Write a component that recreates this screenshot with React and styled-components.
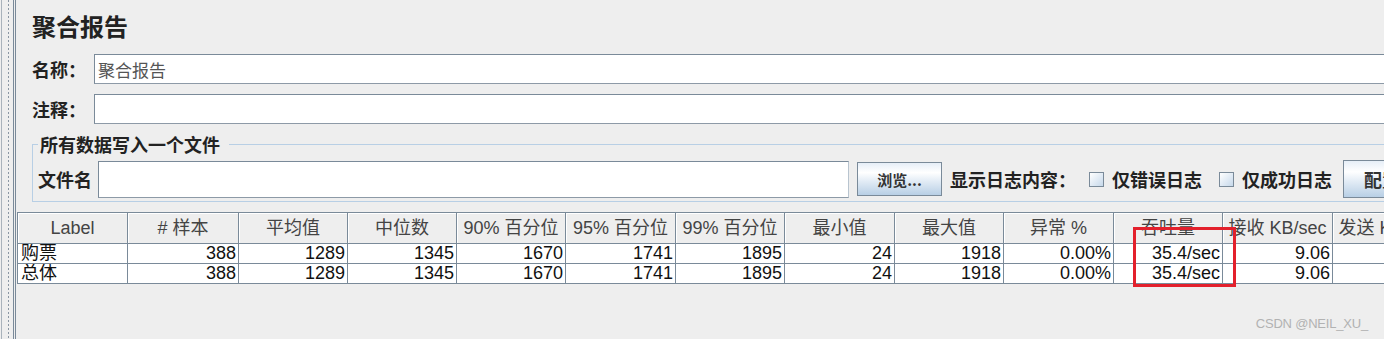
import React from 'react';
import styled, { createGlobalStyle } from 'styled-components';

const GlobalStyle = createGlobalStyle`
  html, body {
    margin: 0;
    padding: 0;
    background: #eeeeee;
    overflow: hidden;
  }
  body {
    font-family: "Liberation Sans", "Noto Sans CJK SC", sans-serif;
    color: #222;
  }
`;

const Window = styled.div`
  position: relative;
  display: flex;
  width: 1384px;
  height: 339px;
  overflow: hidden;
  background: #eeeeee;
`;

const Splitter = styled.div`
  flex: 0 0 17px;
  background:
    linear-gradient(#a9b2bb, #a9b2bb) 1px 0 / 1px 100% no-repeat,
    repeating-linear-gradient(to bottom, #8a96a3 0 2px, transparent 2px 4px) 8px 0 / 1px 100% no-repeat,
    linear-gradient(#7a8a99, #7a8a99) 13px 0 / 1px 100% no-repeat,
    linear-gradient(#7a8a99, #7a8a99) 15px 0 / 1px 100% no-repeat,
    #eeeeee;
`;

const Main = styled.div`
  flex: none;
  width: 1460px;
  display: flex;
  flex-direction: column;
`;

const Form = styled.div`
  display: flex;
  flex-direction: column;
  gap: 10px;
  padding: 11px 0 0 15px;
`;

const Title = styled.div`
  font-family: "Noto Sans CJK SC", sans-serif;
  font-size: 24px;
  font-weight: bold;
  line-height: 30px;
  margin-bottom: 3px;
`;

const FieldRow = styled.div`
  display: flex;
  align-items: center;
  height: 30px;
`;

const FieldLabel = styled.span`
  flex: 0 0 ${({ $w }) => $w}px;
  font-family: "Noto Sans CJK SC", sans-serif;
  font-size: 18px;
  font-weight: bold;
  line-height: 20px;
  white-space: nowrap;
`;

const TextInput = styled.input`
  box-sizing: border-box;
  flex: ${({ $w }) => ($w ? `0 0 ${$w}px` : '1')};
  height: ${({ $h }) => $h || 30}px;
  margin: 0;
  padding: 0 3px;
  border: 1px solid #7a8a99;
  border-right-color: #b8c4cf;
  border-bottom-color: #8d9aa7;
  background: #ffffff;
  font-family: "Noto Sans CJK SC", sans-serif;
  font-size: 17px;
  color: #555;
  outline: none;
`;

const Group = styled.fieldset`
  margin: 0;
  padding: 6px 0 3px 5px;
  border: 1px solid #b8cfe5;
  min-width: 0;
`;

const Legend = styled.legend`
  padding: 0 9px 0 2px;
  font-family: "Noto Sans CJK SC", sans-serif;
  font-size: 18px;
  font-weight: bold;
  line-height: 20px;
`;

const FileRow = styled.div`
  display: flex;
  align-items: center;
  height: 38px;
`;

const MetalButton = styled.button`
  flex: none;
  box-sizing: border-box;
  margin: 0 0 0 ${({ $ml }) => $ml}px;
  width: ${({ $w }) => $w}px;
  height: ${({ $h }) => $h}px;
  padding: 0;
  border: 1px solid #7a8a99;
  background: linear-gradient(to bottom, #e6eef7 0%, #ffffff 30%, #e4edf6 55%, #b8cfe5 100%);
  font-family: "Noto Sans CJK SC", sans-serif;
  font-size: ${({ $fs }) => $fs}px;
  font-weight: bold;
  color: #333;
  text-align: ${({ $align }) => $align || 'center'};
  padding-left: ${({ $pl }) => $pl || 0}px;
`;

const Text = styled.span`
  flex: none;
  margin-left: ${({ $ml }) => $ml || 0}px;
  font-family: "Noto Sans CJK SC", sans-serif;
  font-size: 18px;
  font-weight: bold;
  line-height: 20px;
  white-space: nowrap;
`;

const CheckItem = styled.label`
  flex: none;
  display: flex;
  align-items: center;
  gap: 8px;
  margin-left: ${({ $ml }) => $ml}px;
`;

const CheckBox = styled.span`
  box-sizing: border-box;
  width: 15px;
  height: 15px;
  border: 1px solid #7a8a99;
  background: linear-gradient(to bottom right, #ffffff 0%, #dde8f3 60%, #c6d8ea 100%);
`;

const TableArea = styled.div`
  position: relative;
  margin-top: 10px;
`;

const Grid = styled.div`
  display: grid;
  grid-template-columns: ${({ $cols }) => $cols.map((c) => `${c}px`).join(' ')};
  grid-template-rows: 31px 20px 20px;
  width: max-content;
  border-left: 1px solid #7a8a99;
  border-top: 1px solid #7a8a99;
`;

const HeadCell = styled.div`
  box-sizing: border-box;
  background: #eeeeee;
  border-right: 1px solid #7a8a99;
  border-bottom: 1px solid #7a8a99;
  box-shadow: inset 1px 1px 0 #ffffff;
  font-size: 18px;
  line-height: 30px;
  color: #444;
  text-align: center;
  white-space: nowrap;
  overflow: hidden;
`;

const Cell = styled.div`
  box-sizing: border-box;
  background: #ffffff;
  border-right: 1px solid #7a8a99;
  border-bottom: 1px solid #7a8a99;
  font-size: 18px;
  line-height: 19px;
  color: #111;
  padding: 0 ${({ $left }) => ($left ? '0 0 3px' : '2px 0 0')};
  text-align: ${({ $left }) => ($left ? 'left' : 'right')};
  white-space: nowrap;
  overflow: hidden;
`;

const Highlight = styled.div`
  position: absolute;
  left: 1116px;
  top: 15px;
  width: 103px;
  height: 60px;
  box-sizing: border-box;
  border: 3px solid #e3202c;
  pointer-events: none;
`;

const Watermark = styled.div`
  position: absolute;
  right: 16px;
  bottom: 8px;
  font-size: 13px;
  color: #b2b2b2;
  letter-spacing: -0.2px;
`;

const columns = [110, 111, 109, 109, 109, 110, 109, 110, 109, 110, 109, 110, 110];

const headers = [
  'Label', '# 样本', '平均值', '中位数', '90% 百分位', '95% 百分位', '99% 百分位',
  '最小值', '最大值', '异常 %', '吞吐量', '接收 KB/sec', '发送 KB/sec',
];

const rows = [
  ['购票', '388', '1289', '1345', '1670', '1741', '1895', '24', '1918', '0.00%', '35.4/sec', '9.06', '5.12'],
  ['总体', '388', '1289', '1345', '1670', '1741', '1895', '24', '1918', '0.00%', '35.4/sec', '9.06', '5.12'],
];

export default function App() {
  return (
    <Window>
      <GlobalStyle />
      <Splitter />
      <Main>
        <Form>
          <Title>聚合报告</Title>
          <FieldRow>
            <FieldLabel $w={62}>名称：</FieldLabel>
            <TextInput defaultValue="聚合报告" readOnly />
          </FieldRow>
          <FieldRow>
            <FieldLabel $w={62}>注释：</FieldLabel>
            <TextInput defaultValue="" readOnly />
          </FieldRow>
          <Group>
            <Legend>所有数据写入一个文件</Legend>
            <FileRow>
              <FieldLabel $w={60}>文件名</FieldLabel>
              <TextInput $w={751} $h={37} readOnly />
              <MetalButton $ml={8} $w={85} $h={34} $fs={15}>浏览...</MetalButton>
              <Text $ml={8}>显示日志内容：</Text>
              <CheckItem $ml={13}>
                <CheckBox />
                <Text>仅错误日志</Text>
              </CheckItem>
              <CheckItem $ml={17}>
                <CheckBox />
                <Text>仅成功日志</Text>
              </CheckItem>
              <MetalButton $ml={11} $w={90} $h={38} $fs={18} $align="left" $pl={20}>配置</MetalButton>
            </FileRow>
          </Group>
        </Form>
        <TableArea>
          <Grid $cols={columns}>
            {headers.map((h) => (
              <HeadCell key={h}>{h}</HeadCell>
            ))}
            {rows.map((r, ri) =>
              r.map((v, ci) => (
                <Cell key={`${ri}-${ci}`} $left={ci === 0}>{v}</Cell>
              ))
            )}
          </Grid>
          <Highlight />
        </TableArea>
      </Main>
      <Watermark>CSDN @NEIL_XU_</Watermark>
    </Window>
  );
}
